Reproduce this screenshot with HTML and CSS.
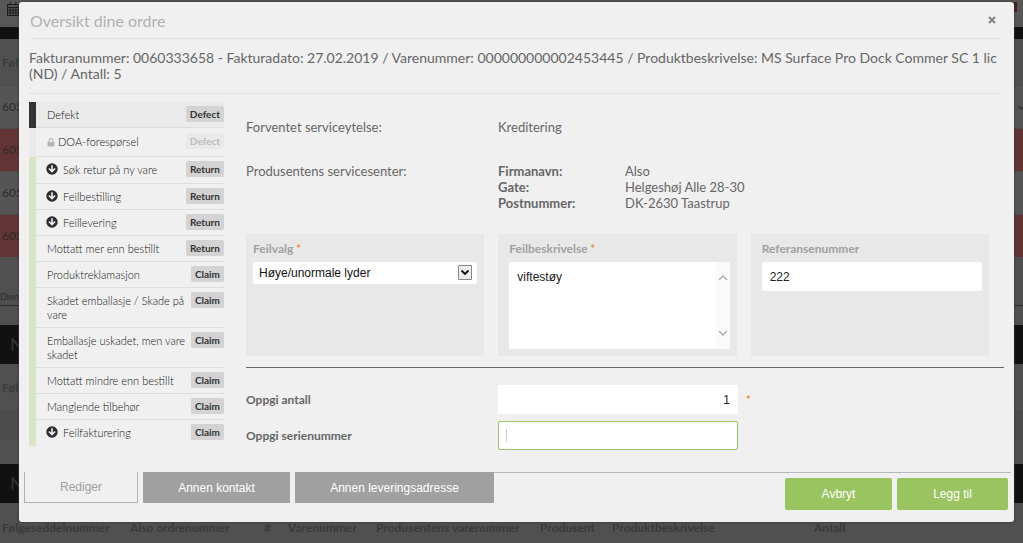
FILE: index.html
```html
<!DOCTYPE html>
<html lang="no">
<head>
<meta charset="utf-8">
<title>Oversikt dine ordre</title>
<link rel="stylesheet" href="styles.css">
</head>
<body>
<svg class="sprite" aria-hidden="true">
  <symbol id="down" viewBox="0 0 12 12"><circle cx="6" cy="6" r="5.7" fill="#2b2b2b"/><path d="M6 2.3v6M2.9 5.5L6 8.6l3.1-3.1" fill="none" stroke="#f0f0f0" stroke-width="1.6"/></symbol>
  <symbol id="lock" viewBox="0 0 8 9"><path d="M2 4V2.7a2 2 0 0 1 4 0V4" fill="none" stroke="#b5b5b5" stroke-width="1.2"/><rect x=".5" y="4" width="7" height="4.5" rx=".5" fill="#b5b5b5"/></symbol>
</svg>
<div class="page">
  <div class="toolbar">
    <svg width="12" height="14" viewBox="0 0 12 14"><path d="M.5 2.5h11v11H.5zM.5 5.5h11M.5 8.2h11M.5 10.9h11M3.2 5v8.5M6 5v8.5M8.8 5v8.5M3.2 0v3.5M8.8 0v3.5" fill="none" stroke="#1c1c1c"/></svg>
    <span class="flag"></span>
  </div>
  <div class="strip"></div>
  <div class="list-head">Føl</div>
  <div class="list-row"><span>605</span><svg width="8" height="6" viewBox="0 0 8 6"><path d="M1 1l3 3 3-3" fill="none" stroke="#333" stroke-width="1.5"/></svg></div>
  <div class="list-row alert">605</div>
  <div class="list-row">605</div>
  <div class="list-row alert">605</div>
  <div class="service">Dienst</div>
  <div class="gap"></div>
  <div class="section">N</div>
  <div class="list-head">Føl</div>
  <div class="list-row shade"></div>
  <div class="gap"></div>
  <div class="section">N</div>
  <div class="columns"><span>Følgeseddelnummer</span><span>Also ordrenummer</span><span>#</span><span>Varenummer</span><span>Produsentens varenummer</span><span>Produsent</span><span>Produktbeskrivelse</span><span>Antall</span></div>
</div>

<div class="modal" role="dialog" aria-labelledby="title">
  <header class="modal-head">
    <h1 id="title">Oversikt dine ordre</h1>
    <button class="close" type="button" aria-label="Lukk"><svg width="8" height="8" viewBox="0 0 8 8"><path d="M1 1l6 6M7 1L1 7" stroke="#888" stroke-width="2.2"/></svg></button>
  </header>
  <h2 class="summary">Fakturanummer: 0060333658 - Fakturadato: 27.02.2019 / Varenummer: 000000000002453445 / Produktbeskrivelse: MS Surface Pro Dock Commer SC 1 lic (ND) / Antall: 5</h2>
  <div class="body">
    <ul class="types">
      <li class="active"><span>Defekt</span><b>Defect</b></li>
      <li class="locked"><svg class="lock"><use href="#lock"/></svg><span>DOA-forespørsel</span><b>Defect</b></li>
      <li class="tall"><svg class="down"><use href="#down"/></svg><span>Søk retur på ny vare</span><b>Return</b></li>
      <li><svg class="down"><use href="#down"/></svg><span>Feilbestilling</span><b>Return</b></li>
      <li><svg class="down"><use href="#down"/></svg><span>Feillevering</span><b>Return</b></li>
      <li><span>Mottatt mer enn bestillt</span><b>Return</b></li>
      <li><span>Produktreklamasjon</span><b>Claim</b></li>
      <li><span>Skadet emballasje / Skade på vare</span><b>Claim</b></li>
      <li><span>Emballasje uskadet, men vare skadet</span><b>Claim</b></li>
      <li><span>Mottatt mindre enn bestillt</span><b>Claim</b></li>
      <li><span>Manglende tilbehør</span><b>Claim</b></li>
      <li><svg class="down"><use href="#down"/></svg><span>Feilfakturering</span><b>Claim</b></li>
    </ul>
    <form class="details" id="claim">
      <div class="info">
        <span>Forventet serviceytelse:</span><span>Kreditering</span>
      </div>
      <div class="info center">
        <span>Produsentens servicesenter:</span>
        <dl><dt>Firmanavn:</dt><dd>Also</dd><dt>Gate:</dt><dd>Helgeshøj Alle 28-30</dd><dt>Postnummer:</dt><dd>DK-2630 Taastrup</dd></dl>
      </div>
      <div class="cards">
        <div class="card">
          <label for="fault">Feilvalg <i>*</i></label>
          <div class="select"><select id="fault"><option>Høye/unormale lyder</option></select><svg width="14" height="15" viewBox="0 0 14 15"><path d="M.5.5h13v14H.5z" fill="#eee" stroke="#888"/><path d="M3.500 5.500L7 9l3.500-3.500" fill="none" stroke="#111" stroke-width="1.800"/></svg></div>
        </div>
        <div class="card">
          <label for="desc">Feilbeskrivelse <i>*</i></label>
          <div class="area"><textarea id="desc">viftestøy</textarea><span class="scroll"><svg width="10" height="6" viewBox="0 0 10 6"><path d="M1 5l4-4 4 4" fill="none" stroke="#b4b4b4" stroke-width="1.600"/></svg><svg width="10" height="6" viewBox="0 0 10 6"><path d="M1 1l4 4 4-4" fill="none" stroke="#b4b4b4" stroke-width="1.600"/></svg></span></div>
        </div>
        <div class="card">
          <label for="ref">Referansenummer</label>
          <input id="ref" type="text" value="222">
        </div>
      </div>
      <div class="amounts">
        <label for="count">Oppgi antall</label><input id="count" class="number" type="text" value="1"><i>*</i>
        <label for="serial">Oppgi serienummer</label><div class="serial"><input id="serial" type="text"><span class="caret"></span></div>
      </div>
    </form>
  </div>
  <footer class="modal-foot">
    <div class="tabs">
      <button class="tab current" type="button">Rediger</button>
      <button class="tab contact" type="button">Annen kontakt</button>
      <button class="tab address" type="button">Annen leveringsadresse</button>
    </div>
    <div class="actions">
      <button type="button">Avbryt</button>
      <button type="submit" form="claim">Legg til</button>
    </div>
  </footer>
</div>
</body>
</html>
```
FILE: styles.css
```css
* { box-sizing: border-box; }
body { margin: 0; position: relative; min-height: 100vh; background: #505050; font-family: Lato, "Noto Sans", sans-serif; overflow: hidden; }
button, input, select, textarea { font-family: "Liberation Sans", Arial, sans-serif; }
.sprite { position: absolute; width: 0; height: 0; }

.page { height: 100vh; overflow: hidden; color: #2a2a2a; font-size: 12px; }
.toolbar { display: flex; justify-content: space-between; height: 27px; padding: 2px 6px 0 7px; background: #575757; }
.flag { width: 16px; height: 10px; background: #4a2020; }
.strip { height: 12px; background: #111; }
.list-head { height: 46px; padding: 16px 2px; font-weight: 700; color: #3c3c3c; }
.list-row { display: flex; justify-content: space-between; height: 43px; padding: 13px 0 0 2px; background: #555; border-top: 1px solid #4c4c4c; }
.list-row svg { margin-top: 6px; margin-right: -2px; }
.list-row.alert { background: #623434; }
.list-row.shade { background: #4c4c4c; height: 30px; }
.service { height: 49px; padding-top: 34px; font-size: 9px; border-bottom: 1px solid #2a2a2a; }
.gap { height: 19px; }
.section { height: 39px; padding: 8px 10px; background: #111; color: #333; font-size: 18px; }
.shade + .gap { height: 24px; }
.columns { display: grid; grid-template-columns: 128px 134px 24px 88px 164px 72px 202px 1fr; padding: 17px 2px; font-weight: 700; font-size: 12px; color: #3a3a3a; white-space: nowrap; }

.modal { position: absolute; top: 2px; left: 19px; right: 9px; padding-bottom: 12px; background: #f0f0f0; border-radius: 3px; color: #666; box-shadow: 0 0 3px #333; }
.modal-head { display: flex; align-items: center; justify-content: space-between; height: 37px; margin: 0 13px 0 11px; border-bottom: 1px solid #e2e2e2; }
h1 { margin: 0; font-size: 16px; font-weight: 400; color: #b0b0b0; }
.close { display: flex; margin-right: 5px; padding: 0; border: 0; background: none; }
.summary { margin: 0 13px 0 10px; padding: 11px 0; font-size: 14px; line-height: 16px; font-weight: 400; border-bottom: 1px solid #e2e2e2; }
.body { display: grid; grid-template-columns: 195px 1fr; column-gap: 22px; padding: 8px 10px 0; }

.types { margin: 0; padding: 0; list-style: none; font-size: 11px; line-height: 14px; font-weight: 300; color: #111; }
.types li { display: flex; align-items: flex-start; min-height: 26px; padding: 5px 0 6px 11px; border-left: 7px solid #d8e6c6; position: relative; }
.types li::after { content: ""; position: absolute; left: 0; right: 0; bottom: 0; height: 1px; background: #dedede; }
.types li:last-child::after { display: none; }
.types span { flex: 1; padding-top: 1px; }
.types b { margin: -1px 0 -2px; padding: 1px 4px; border-radius: 2px; background: #d3d3d3; color: #333; font-size: 10px; font-weight: 700; }
.types .active { background: #eaeaea; border-left-color: #333; }
.types .locked { min-height: 29px; padding-top: 6px; border-left-color: #eaeaea; }
.types .tall { min-height: 27px; }
.types .locked b { background: #e9e9e9; color: #bbb; }
.lock { width: 8px; height: 9px; margin: 4px 3px 0 0; }
.down { width: 12px; height: 12px; margin: 1px 5px 0 -1px; }

.info { display: grid; grid-template-columns: 252px 1fr; padding-top: 17px; font-size: 13px; line-height: 16px; }
.info.center { padding-top: 28px; }
dl { display: grid; grid-template-columns: 127px 1fr; margin: 0; }
dt { font-weight: 700; }
dd { margin: 0; }
.cards { display: grid; grid-template-columns: repeat(3, 1fr); gap: 14px; margin: 23px 15px 0 0; }
.card { height: 122px; padding: 6px 7px 0; background: #e8e8e8; font-size: 12px; }
.card + .card { padding-left: 11px; }
.card label { display: block; height: 22px; line-height: 17px; font-weight: 700; color: #a0a0a0; }
i { color: #f08c3c; font-style: normal; font-weight: 700; font-size: 11px; }
input { width: 100%; height: 29px; padding: 0 8px; border: 0; border-radius: 2px; background: #fff; color: #222; font-size: 12px; outline: 0; }
.select { position: relative; }
select { display: block; width: 100%; height: 22px; padding: 0 6px; border: 0; border-radius: 2px; background: #fff; color: #111; font-size: 12px; appearance: none; }
.select svg { position: absolute; top: 3px; right: 5px; pointer-events: none; }
.area { position: relative; height: 87px; }
textarea { display: block; width: 100%; height: 100%; padding: 8px 20px 7px 8px; border: 0; border-radius: 2px; background: #fff; color: #222; font-size: 12px; resize: none; }
.scroll { position: absolute; top: 0; right: 0; bottom: 0; display: flex; flex-direction: column; justify-content: space-between; padding: 13px 2px; background: #fafafa; }
.amounts { display: grid; grid-template-columns: 252px 240px 1fr; row-gap: 7px; align-items: center; margin-top: 11px; padding-top: 17px; border-top: 1px solid #666; font-size: 12px; }
.amounts label { font-weight: 700; }
.amounts i { margin-left: 8px; }
.number { text-align: right; }
.serial { position: relative; }
.serial input { display: block; border: 1px solid #9ac465; }
.caret { position: absolute; left: 8px; top: 8px; width: 1px; height: 13px; background: #ccc; }

.modal-foot { display: flex; justify-content: space-between; margin: 22px 3px 0 5px; }
.tabs { display: flex; flex: 1; }
.tab { height: 31px; padding: 0; border: 0; border-radius: 0 0 1px 1px; background: #a0a0a0; color: #fff; font-size: 12px; }
.tab { margin-right: 5px; }
.current { width: 114px; border: 1px solid #b0b0b0; border-top: 0; background: #f0f0f0; color: #a0a0a0; margin-right: 0; }
.contact { width: 147px; margin-left: 5px; }
.address { width: 199px; }
.tabs::after { content: ""; flex: 1; margin-left: -5px; border-top: 1px solid #b8b8b8; }
.actions { display: flex; gap: 5px; padding: 5px 3px 0 0; border-top: 1px solid #b8b8b8; }
.actions button { width: 107px; height: 32px; padding: 0; border: 0; border-radius: 2px; background: #9ac45f; color: #fff; font-size: 12px; }
.actions button + button { width: 111px; }
```
